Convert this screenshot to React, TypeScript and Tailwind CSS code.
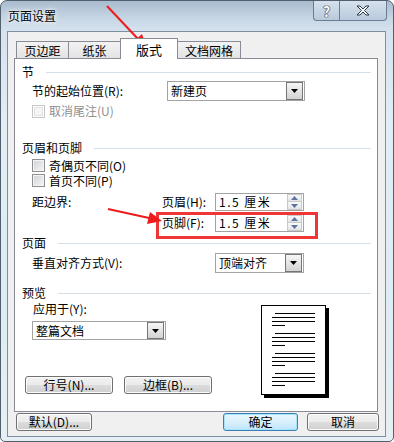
import React from "react";
import clsx from "clsx";

const Checkbox = ({ disabled }: { disabled?: boolean }) => (
  <span
    className={clsx(
      "inline-block h-[13px] w-[13px] shrink-0 border",
      disabled
        ? "border-[#c6c6c6] bg-[#f4f4f4] shadow-[inset_0_0_0_1px_#fff,inset_0_0_0_2px_#e2e2e2]"
        : "border-[#8e8f8f] bg-gradient-to-br from-[#cfd2d6] to-[#f7f7f7] shadow-[inset_0_0_0_1px_#f4f4f4]"
    )}
  />
);

const Arrow = () => (
  <svg width="7" height="4" viewBox="0 0 7 4">
    <path d="M0 0h7L3.5 4z" fill="#000" />
  </svg>
);

const Select = ({ value, className }: { value: string; className?: string }) => (
  <div
    className={clsx(
      "flex items-center justify-between border border-[#a3a3a3] bg-white pl-[3px] pr-px",
      className
    )}
  >
    <span>{value}</span>
    <span className="flex h-[18px] w-[17px] items-center justify-center border border-[#757575] bg-gradient-to-b from-[#f6f6f6] to-[#d3d3d3]">
      <Arrow />
    </span>
  </div>
);

const Spin = ({ value }: { value: string }) => (
  <div className="flex h-[18px] w-[89px] items-center border border-[#a3a3a3] bg-white pl-[3px]">
    <span className="tracking-[1.5px]">{value}</span>
    <div className="ml-auto mr-px flex h-[16px] w-[15px] flex-col">
      <div className="flex h-[8px] items-center justify-center border border-[#c9c9c9] bg-gradient-to-b from-[#fafafa] to-[#e4e4e4]">
        <svg width="7" height="4" viewBox="0 0 7 4">
          <path d="M3.5 0L7 4H0z" fill="#5d73a0" />
        </svg>
      </div>
      <div className="-mt-px flex h-[9px] items-center justify-center border border-[#c9c9c9] bg-gradient-to-b from-[#fafafa] to-[#e4e4e4]">
        <svg width="7" height="4" viewBox="0 0 7 4">
          <path d="M0 0h7L3.5 4z" fill="#5d73a0" />
        </svg>
      </div>
    </div>
  </div>
);

const Button = ({
  label,
  className,
  primary,
}: {
  label: string;
  className?: string;
  primary?: boolean;
}) => (
  <div
    className={clsx(
      "flex h-[18px] items-center justify-center rounded-[3px] border",
      primary
        ? "border-[#3c7fb1] bg-gradient-to-b from-[#eaf6fd] via-[#d9f0fc] to-[#bee6fd] shadow-[inset_0_0_0_1px_#a8e2fb]"
        : "border-[#707070] bg-[linear-gradient(#f2f2f2,#ebebeb_50%,#dddddd_50%,#cfcfcf)] shadow-[inset_0_0_0_1px_#fcfcfc]",
      className
    )}
  >
    {label}
  </div>
);

const Header = ({ title, className }: { title: string; className?: string }) => (
  <div className={clsx("flex h-[16px] items-center", className)}>
    <span>{title}</span>
    <span className="ml-[12px] h-px flex-1 bg-[#d5dfe5]" />
  </div>
);

const Tab = ({ label, active, w }: { label: string; active?: boolean; w: string }) => (
  <div
    className={clsx(
      "-ml-px flex items-center justify-center border border-b-0 border-[#898c95] first:ml-0",
      active
        ? "relative z-10 -mb-px h-[21px] bg-white pt-px text-[13px]"
        : "h-[17px] bg-gradient-to-b from-[#f3f3f3] to-[#e3e3e3] pt-[2px]",
      w
    )}
  >
    {label}
  </div>
);

const PagePreview = () => {
  const paras = [8, 28, 48, 68];
  return (
    <svg width="68" height="93" viewBox="0 0 68 93">
      <rect x="3" y="3" width="65" height="90" fill="#000" />
      <rect x="0.5" y="0.5" width="64" height="89" fill="#fff" stroke="#000" />
      {paras.map((y) => (
        <g key={y} fill="#000">
          <rect x="14" y={y} width="40" height="1" />
          <rect x="11" y={y + 4} width="43" height="1" />
          <rect x="11" y={y + 8} width="43" height="1" />
          <rect x="11" y={y + 12} width="13" height="1" />
        </g>
      ))}
    </svg>
  );
};

export default function App() {
  return (
    <div className="relative h-[442px] w-[394px] overflow-hidden bg-white font-['Noto_Sans_CJK_SC','Noto_Sans',sans-serif] text-[12px] leading-[14px] text-black">
      <div className="flex h-full w-full flex-col rounded-t-[7px] rounded-b-[5px] border border-[#52606e] bg-[linear-gradient(180deg,#a9bbce_0px,#c8d7e6_18px,#d6e2ee_30px,#e2eef5_120px,#dcedf3_300px,#e6f0f4_442px)]">
        {/* title bar */}
        <div className="flex h-[30px] items-start">
          <span className="mt-[8px] ml-[7px] [text-shadow:0_0_6px_#fff,0_0_3px_#fff]">
            页面设置
          </span>
          <div className="ml-auto mr-[6px] flex h-[20px]">
            <div className="flex w-[27px] items-center justify-center rounded-bl-[4px] border border-t-0 border-[#6b7d90] bg-gradient-to-b from-[#d6e1ec] to-[#b9cadc] text-[14px] font-bold text-white [text-shadow:0_0_1px_#223,0_0_1px_#223,0_0_1px_#223]">
              ?
            </div>
            <div className="-ml-px flex w-[48px] items-center justify-center rounded-br-[4px] border border-t-0 border-[#6b7d90] bg-gradient-to-b from-[#d6e1ec] to-[#b9cadc]">
              <svg width="14" height="11" viewBox="0 0 14 11">
                <path
                  d="M1 1h3l3 3 3-3h3l-4.5 4.5L13 10h-3L7 7l-3 3H1l4.5-4.5z"
                  fill="#fff"
                  stroke="#2a3442"
                  strokeWidth="1"
                  strokeLinejoin="round"
                />
              </svg>
            </div>
          </div>
        </div>

        {/* client area */}
        <div className="ml-[6px] mr-[7px] h-[406px] border border-[#7d8fa2] bg-[#f0f0f0] pt-[6px]">
          <div className="ml-[6px] w-[364px]">
            <div className="flex h-[20px] items-end pl-[2px]">
              <Tab label="页边距" w="w-[53px]" />
              <Tab label="纸张" w="w-[53px]" />
              <Tab label="版式" w="w-[58px]" active />
              <Tab label="文档网格" w="w-[64px]" />
            </div>
            <div className="border border-[#898c95] bg-white pr-[6px] pb-[13px] pl-[7px]">
              <Header title="节" className="mt-[5px]" />
              <div className="mt-px flex h-[20px] items-center pl-[10px]">
                <span className="w-[135px]">节的起始位置(R):</span>
                <Select value="新建页" className="h-[20px] w-[138px]" />
              </div>
              <div className="mt-px flex h-[18px] items-center gap-[4px] pl-[10px] text-[#8f8f8f]">
                <Checkbox disabled />
                <span>取消尾注(U)</span>
              </div>

              <Header title="页眉和页脚" className="mt-[20px]" />
              <div className="mt-[2px] flex h-[15px] items-center gap-[4px] pl-[10px]">
                <Checkbox />
                <span>奇偶页不同(O)</span>
              </div>
              <div className="flex h-[15px] items-center gap-[4px] pl-[10px]">
                <Checkbox />
                <span>首页不同(P)</span>
              </div>
              <div className="mt-[5px] flex h-[18px] items-center pl-[10px]">
                <span className="w-[130px]">距边界:</span>
                <span className="w-[53px]">页眉(H):</span>
                <Spin value="1.5 厘米" />
              </div>
              <div className="mt-[3px] flex h-[18px] items-center pl-[140px]">
                <span className="w-[53px]">页脚(F):</span>
                <Spin value="1.5 厘米" />
              </div>

              <Header title="页面" className="mt-[3px]" />
              <div className="mt-[2px] flex h-[20px] items-center pl-[10px]">
                <span className="w-[183px]">垂直对齐方式(V):</span>
                <Select value="顶端对齐" className="h-[20px] w-[89px]" />
              </div>

              <Header title="预览" className="mt-[12px]" />
              <div className="flex">
                <div className="flex w-[239px] flex-col">
                  <div className="mt-px flex h-[14px] items-center pl-[11px]">
                    <span>应用于(Y):</span>
                  </div>
                  <div className="mt-[5px] pl-[10px]">
                    <Select value="整篇文档" className="h-[19px] w-[134px] [&>span:last-child]:h-[17px]" />
                  </div>
                  <div className="mt-[36px] flex gap-[11px] pl-[3px]">
                    <Button label="行号(N)..." className="w-[88px]" />
                    <Button label="边框(B)..." className="w-[88px]" />
                  </div>
                </div>
                <div className="mt-[4px]">
                  <PagePreview />
                </div>
              </div>
            </div>
          </div>

          <div className="mt-px flex pl-[8px]">
            <Button label="默认(D)..." className="w-[76px]" />
            <Button label="确定" className="ml-[131px] w-[75px]" primary />
            <Button label="取消" className="ml-[9px] w-[72px]" />
          </div>
        </div>
      </div>

      {/* annotations */}
      <div className="pointer-events-none absolute top-[212px] left-[156px] h-[27px] w-[162px] border-[3px] border-[#ef3636]" />
      <svg
        className="pointer-events-none absolute top-0 left-0"
        width="394"
        height="442"
        viewBox="0 0 394 442"
      >
        <line x1="107" y1="6" x2="139" y2="40" stroke="#ec1c1c" strokeWidth="2" />
        <path d="M147 49L133 42L142 34z" fill="#ec1c1c" />
        <line x1="108" y1="209" x2="149" y2="218" stroke="#ec1c1c" strokeWidth="2" />
        <path d="M162 221L147 224L150 212z" fill="#ec1c1c" />
      </svg>
    </div>
  );
}
